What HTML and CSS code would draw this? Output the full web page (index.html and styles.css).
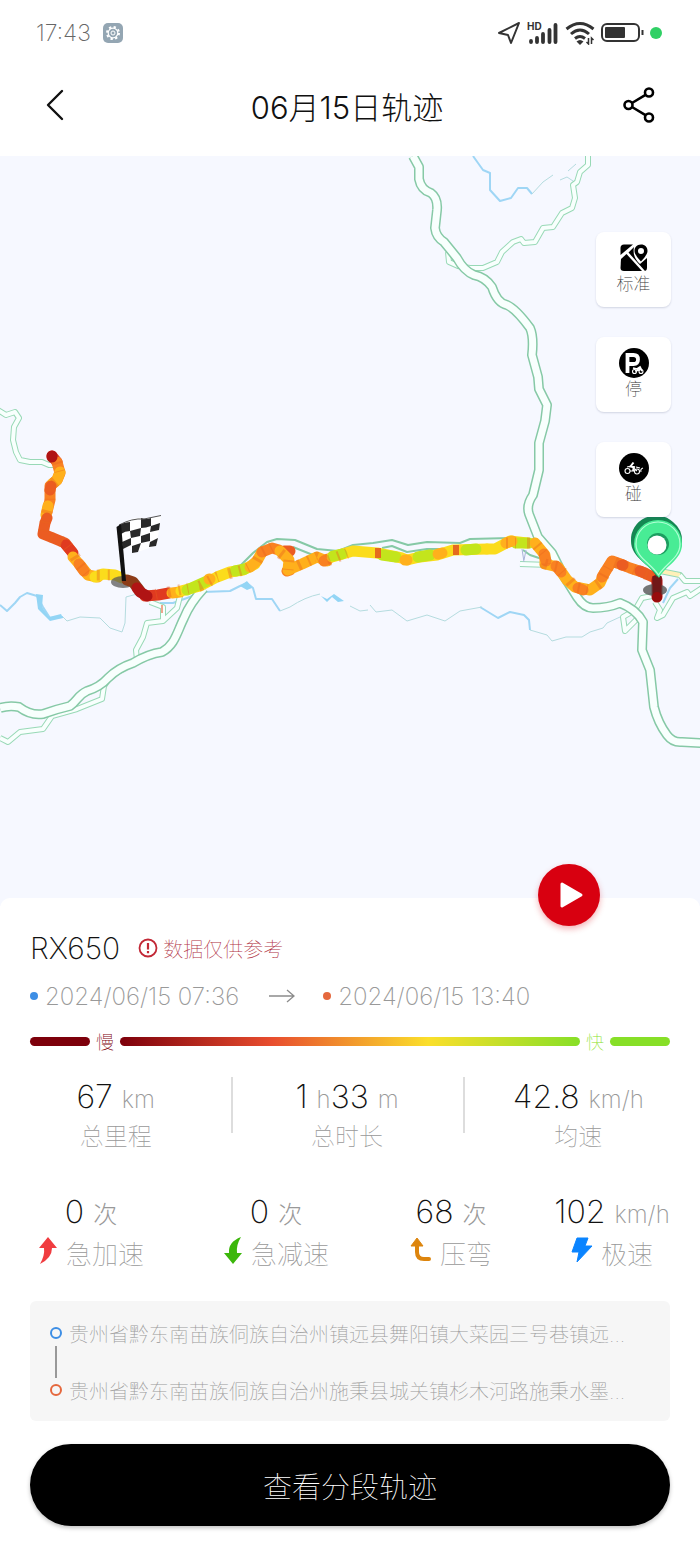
FILE: index.html
```html
<!DOCTYPE html>
<html lang="zh-CN">
<head>
  <meta charset="UTF-8" />
  <meta name="viewport" content="width=device-width, initial-scale=1.0" />
  <title>06月15日轨迹</title>
  <link rel="stylesheet" href="styles.css">
</head>
<body>
  <div class="status-bar">
    <span class="clock">17:43</span>
    <svg class="status-gear" width="20" height="20" viewBox="0 0 20 20" aria-hidden="true">
      <rect width="20" height="20" rx="5" fill="#94a6b3"/>
      <circle cx="10" cy="10" r="6" fill="none" stroke="#fff" stroke-width="2" stroke-dasharray="2.3 2.4"/>
      <circle cx="10" cy="10" r="4.8" fill="none" stroke="#fff" stroke-width="1.2"/>
      <circle cx="10" cy="10" r="2" fill="none" stroke="#fff"/>
    </svg>
    <div class="status-icons">
      <svg width="24" height="24" viewBox="0 0 24 24" aria-hidden="true">
        <path d="M22 2 L14 22 L11 14 L2 12 Z" fill="none" stroke="#333" stroke-width="2" stroke-linejoin="round"/>
      </svg>
      <svg width="32" height="24" viewBox="0 0 32 24" aria-hidden="true">
        <text x="0" y="9" class="hd">HD</text>
        <path d="M4 21v-1M10 21v-4M16 21v-8M22.500 21v-12M28.500 21V4" fill="none" stroke="#333" stroke-width="3.800" stroke-linecap="round"/>
      </svg>
      <svg width="30" height="24" viewBox="0 0 30 24" aria-hidden="true">
        <path d="M1.500 8 Q15 -3 28.500 8M6 13 Q15 5 24 13M10 17.500 Q15 13.500 20 17.500" fill="none" stroke="#333" stroke-width="3"/>
        <path d="M11.500 20.500 Q15 17.500 18.500 20.500 L15 24Z" fill="#333"/>
        <path d="M23.500 17v6l-2-2M26.500 23v-6l2 2" fill="none" stroke="#333" stroke-width="1.500"/>
      </svg>
      <svg class="battery" width="43" height="20" viewBox="0 0 43 20" aria-hidden="true">
        <rect x="1" y="1" width="37" height="17" rx="5" fill="none" stroke="#333" stroke-width="2"/>
        <rect x="4" y="4" width="20" height="11" rx="1" fill="#333"/>
        <path d="M41.500 7v5" stroke="#333" stroke-width="2"/>
      </svg>
      <span class="privacy-dot"></span>
    </div>
  </div>

  <header class="title-bar">
    <button class="icon-btn" type="button" aria-label="返回">
      <svg width="20" height="34" viewBox="0 0 20 34" aria-hidden="true"><path d="M17 3 L3 17 L17 31" fill="none" stroke="#111" stroke-width="2.400" stroke-linecap="round" stroke-linejoin="round"/></svg>
    </button>
    <h1>06月15日轨迹</h1>
    <button class="icon-btn" type="button" aria-label="分享">
      <svg width="32" height="36" viewBox="0 0 32 36" fill="none" stroke="#000" stroke-width="2.600" aria-hidden="true">
        <circle cx="5.500" cy="18" r="4"/><circle cx="26" cy="5.500" r="4"/><circle cx="26" cy="30.500" r="4"/>
        <path d="M9 16 L22.500 7.800M9 20 L22.500 28.200"/>
      </svg>
    </button>
  </header>

  <main>
    <section class="map" aria-label="轨迹地图">
      <svg class="map-canvas" viewBox="0 156 700 750" aria-hidden="true">
        <defs>
          <g id="main-roads">
            <path d="M0 708 Q9 705 19 707 Q31 716 43 714 Q57 709 70 706 C78 700 78 695 87 691 Q100 687 108 678 Q118 668 133 663 Q148 654 162 652 C175 645 177 632 184 618 Q190 603 204 588"/>
            <path d="M413 156 L419 167 L419 179 Q421 190 431 193 Q438 198 437 210 L435 228 Q436 237 444 242 L457 258 Q464 271 474 275 Q485 277 492 287 Q497 303 507 305 Q516 309 530 328 Q534 337 532 355 L538 377 L539 389 L547 405 L545 421 L539 443 L539 470 L533 495 Q526 505 529 514 L538 537 L552 553 L562 573 L577 597 Q584 608 593 608 Q608 608 620 603 Q636 609 643 622 L642 650 L650 670 L654 707 Q658 723 667 735 Q673 743 682 742 L702 743"/>
          </g>
          <g id="side-roads">
            <path d="M-2 410 L6 415 L15 412 L19 418 L14 427 L13 440 L16 452 L20 460 L30 462 L42 462 L49 465 L54 465"/>
            <path d="M588 156 L588 165 L580 172 L577 182 L573 185 L575 198 L572 208 L562 213 L553 227 L543 228 L535 242 L524 243 L521 239 L513 242 L502 252 L497 262 L483 268 L470 268 L458 266 L449 262 L448 252"/>
            <path d="M180 596 L177 608 L163 621 L147 623 L143 637 L136 650 L137 660 L123 669 L110 677 L104 686 L102 699 L77 709 L52 716 L43 729 L20 732 L8 742 L0 738"/>
            <path d="M150 602 L163 607 L163 620"/>
            <path d="M652 596 L642 598 L635 610 L623 617 L625 631 L637 619"/>
            <path d="M655 602 L660 610 L657 618 L663 615 L673 598 L687 592 L690 596 L702 588"/>
            <path d="M520 564 L550 565"/>
          </g>
        </defs>

        <g class="river">
          <path d="M0 605 L7 611 L15 603 L20 597 L27 593 L37 596 L43 607 L50 618 L63 617"/>
          <path d="M160 603 L173 603 L187 598 L203 592 L230 591 L240 586 L247 583 L253 588 L256 599 L272 599 L280 611"/>
          <path d="M480 607 L498 618 L510 612 L524 615 L529 620 L530 630"/>
          <path d="M473 156 L478 163 L483 170 L490 173 L490 190 L500 201 L511 198 L518 188 L527 188 L532 194"/>
          <path d="M663 603 L670 588 L678 579"/>
        </g>
        <g class="lake">
          <path d="M36 594 L43 595 L42 607 L49 617 L61 614 L63 618 L50 621 L38 609Z"/>
          <path d="M240 586 L247 581 L252 588 L247 590Z"/>
          <path d="M321 596 L327 602 L332 597 L338 602 L344 601 L334 594 L327 599Z"/>
        </g>
        <g class="stream">
          <path d="M63 617 L67 621 L80 617 L100 618 L110 628 L122 632 L125 623 L126 597 L137 594"/>
          <path d="M280 611 L290 607 Q305 597 320 594M350 606 L360 611 L368 610M370 605 L376 612 L392 610 L407 621 L427 615 L445 621 L460 611 L482 607"/>
          <path d="M530 630 L547 635 L552 641 L566 637 L582 637 L590 632 L603 628 L607 623 L620 617"/>
          <path d="M532 194 L543 182 L553 175M560 180 L567 177 L573 181M568 171 L576 164"/>
        </g>

        <use href="#side-roads" class="side-casing"/>
        <use href="#side-roads" class="side-fill"/>
        <use href="#main-roads" class="main-casing"/>
        <use href="#main-roads" class="main-fill"/>
        <g class="highway">
          <path d="M204 586 L225 574 L240 566 L253 553 L267 542 L277 539 L295 540 L317 549 L338 551 L353 545 L373 543 L392 540 L408 545 L427 542 L460 543 L470 539 L510 538"/>
          <path d="M293 547 L313 555M382 548 L392 546 L407 552 L427 549 L443 549M523 550 L530 555 L545 560"/>
        </g>
        <path d="M522 549 L524 562M526 550 L524 560" class="ramp"/>
        <path d="M660 571 L680 575 L685 581 L702 581" class="side-casing"/>
        <path d="M660 571 L680 575" class="town-road"/>
        <path d="M680 575 L685 581 L702 581" class="side-fill"/>
        <path d="M162 605v8" class="stub"/>

        <g class="track">
          <path class="t-red" d="M52 456 L57 462"/>
          <path class="t-orange" d="M57 462 L60 473 L57 480 L50 486 L50 500 L47 512"/>
          <path class="t-amber" d="M60 472 L57 480 L52 484M48 506 L46 515"/>
          <path class="t-coral" d="M51 486 L50 490M47 518 L45 523 L43 534 L53 538 L65 543 L72 552"/>
          <path class="t-red" d="M66 545 L73 553"/>
          <path class="t-amber" d="M73 557 L80 565 L88 575 L98 577"/>
          <path class="t-orange" d="M79 564 L84 571"/>
          <path class="t-yellow" d="M95 577 L103 574 L115 575 L122 578"/>
          <path class="t-red" d="M145 596 L158 595 L169 593"/>
          <path class="t-amber" d="M172 593 L180 592"/>
          <path class="t-yellow" d="M181 591 L200 586 L217 577 L230 572 L243 570 L255 564"/>
          <path class="t-lime" d="M187 590 L207 581M235 571 L245 569"/>
          <path class="t-amber" d="M209 579 L210 579M250 567 L257 561 L262 552"/>
          <path class="t-coral" d="M290 551 L284 551"/>
          <path class="t-orange" d="M262 552 L272 548 L279 550M290 570 L287 571"/>
          <path class="t-amber" d="M280 551 L289 560 L288 570 L302 564 L317 557 L327 561"/>
          <path class="t-orange" d="M324 561 L328 559"/>
          <path class="t-yellow" d="M332 557 L353 551 L377 553 L402 558 L407 560 L420 557 L437 555 L453 550 L487 549"/>
          <path class="t-lime" d="M333 556 L342 554M382 555 L396 557M418 557 L430 555M466 550 L476 549"/>
          <path class="t-amber" d="M405 560 L407 560M438 554 L442 553"/>
          <path class="t-yellow" d="M487 549 L495 549 L510 541 L527 543"/>
          <path class="t-lime" d="M516 543 L529 543"/>
          <path class="t-amber" d="M506 543 L512 541M535 543 L540 549 L545 555 L545 564 L558 567 L567 580 L575 587 L590 590 L600 583 L605 572"/>
          <path class="t-orange" d="M544 554 L546 561M556 566 L561 572M578 588 L583 590M602 577 L607 569 L612 561 L623 565"/>
          <path class="t-orange" d="M620 564 L630 568 L645 573"/>
          <path class="t-coral" d="M622 565 L623 565M640 571 L653 577"/>
          <path class="t-dark" d="M52 456 L52 457M657 580 L657 597"/>
        </g>
        <path class="track-bands" d="M57 462 L60 473 L57 480 L50 486 L50 500 L47 512 L43 534 L53 538 L65 543 L72 552 L80 565 L88 575 L103 575 L115 575M147 596 L200 586 L217 577 L243 570 L255 564 L262 552 L272 547 L289 560 L288 570 L317 557 L327 561 L353 551"/>
        <path class="track-bands" d="M506 543 L535 543 L545 555 L545 564 L558 567 L575 587 L590 590 L600 583 L612 561 L653 577"/>
        <path class="band" d="M375 553h6M453 550h6"/>

        <ellipse cx="123" cy="582" rx="12" ry="6" fill="#555" fill-opacity=".72"/>
        <path class="track-brown" d="M127 580 L133 582 L140 591"/>
        <path class="track-dark" d="M137 588 L140 592 L147 596"/>

        <g class="flag">
          <path d="M120 526 Q131 516 143 518 Q153 519 161 515 L157 544 Q147 550 135 552 Q128 545 122 549Z" fill="#fff"/>
          <g fill="#292929">
            <path d="M119 525 Q124 522 130 522 V531 Q125 531 121 534Z"/><path d="M141 518 Q146 520 151 518 V526 Q146 528 141 528Z"/>
            <path d="M130 531 L141 528 L140 536 L131 538Z"/><path d="M151 526 L160 523 L159 530 L150 532Z"/>
            <path d="M122 542 L131 538 L131 545 L123 549Z"/><path d="M141 536 L150 533 L150 541 L141 543Z"/>
            <path d="M132 546 L141 543 L138 552 L132 553Z"/><path d="M150 542 L158 538 L156 546 L149 547Z"/>
          </g>
          <path d="M119 525 Q132 518 144 519 L161 515.500" fill="none" stroke="#555"/>
          <path d="M116.500 527 L121 524 L126 581 H122Z" fill="#111"/>
        </g>

        <ellipse cx="655" cy="590" rx="12" ry="6" fill="#555" fill-opacity=".8"/>
        <path d="M657 576 V595" stroke="#701818" stroke-width="9"/>
        <circle cx="657" cy="597" r="5" fill="#970c0c"/>
        <path d="M657 577 C650 564 631 558 631 541 A25 24 0 0 1 673 522 A25 24 0 0 1 682 542 C682 557 664 564 657 577Z" fill="#158853"/>
        <path d="M659 578 C651 565 634 560 634 544 A24 24 0 0 1 682 544 C682 560 666 565 659 578Z" fill="#48ec95"/>
        <path d="M658.500 575 C651 563 636 558 636 544 A22 22 0 0 1 680 544 C680 558 666 563 658.500 575Z" fill="none" stroke="#b3ffd6" stroke-width="1.200"/>
        <circle cx="658" cy="544" r="11" fill="#1c9d60"/>
        <circle cx="657" cy="545" r="9.500" fill="#fff"/>
      </svg>

      <div class="map-tools">
        <button class="map-tool" type="button">
          <svg width="30" height="30" viewBox="0 0 30 30" aria-hidden="true">
            <path d="M5 1.500H14L1.500 12V5Q1.500 1.500 5 1.500Z"/>
            <path d="M2 16 L7.500 11 L23 28H5Q1.500 28 1.500 25Z"/>
            <path d="M9.500 9.500 L15 4Q13 14 21 21L28 15V25Q28 27.500 26 28Z"/>
            <path fill-rule="evenodd" d="M22 1.500C17.500 1.500 15.500 4.500 15.500 8C15.500 12 22 18.500 22 18.500S28.500 12 28.500 8C28.500 4 26 1.500 22 1.500ZM22 5A3 3 0 1 1 22 11A3 3 0 0 1 22 5Z"/>
          </svg>
          <span>标准</span>
        </button>
        <button class="map-tool" type="button">
          <svg width="30" height="30" viewBox="0 0 30 30" aria-hidden="true">
            <circle cx="15" cy="15" r="15"/>
            <path d="M8.500 25V7H14.500Q19 7 19 11.500T14.500 16H9" fill="none" stroke="#fff" stroke-width="3.800"/>
            <g fill="none" stroke="#fff" stroke-width="1.100"><circle cx="15.500" cy="23.500" r="2"/><circle cx="22" cy="23.500" r="2"/><path d="M14 20 L18 21 L21 19 L23 23M16 23 L20 22 L21 19" stroke-width="1.800"/></g>
          </svg>
          <span>停</span>
        </button>
        <button class="map-tool" type="button">
          <svg width="30" height="30" viewBox="0 0 30 30" aria-hidden="true">
            <circle cx="15" cy="15" r="15"/>
            <g fill="none" stroke="#fff" stroke-width="1.100"><circle cx="8.500" cy="18" r="2.500"/><circle cx="18" cy="18.500" r="2.500"/><path d="M8 14 L12 13 L18 18M11 18h5M17 14l4 1M22 19q-1-3 2-4"/><path d="M14.500 9.500 L11.500 13.500 L15 14 L14 18" stroke-width="2"/></g>
          </svg>
          <span>碰</span>
        </button>
      </div>
    </section>

    <section class="panel">
      <button class="play-btn" type="button" aria-label="播放轨迹">
        <svg width="26" height="28" viewBox="0 0 26 28" aria-hidden="true"><path d="M4 3 L23 14 L4 25Z" fill="#fff" stroke="#fff" stroke-width="3" stroke-linejoin="round"/></svg>
      </button>

      <div class="vehicle">
        <h2>RX650</h2>
        <svg width="20" height="20" viewBox="0 0 20 20" fill="none" stroke="#c22836" stroke-width="1.800" aria-hidden="true"><circle cx="10" cy="10" r="8.500"/><path d="M10 5v6.500M10 13v2.200" stroke-width="2.200"/></svg>
        <span class="notice">数据仅供参考</span>
      </div>

      <div class="period">
        <span class="dot dot-start"></span>
        <time datetime="2024-06-15T07:36">2024/06/15 07:36</time>
        <svg class="arrow" width="26" height="14" viewBox="0 0 26 14" fill="none" stroke="#8c8c8c" stroke-width="1.300" aria-hidden="true"><path d="M0 7H25M18 1L25 7L18 13"/></svg>
        <span class="dot dot-end"></span>
        <time datetime="2024-06-15T13:40">2024/06/15 13:40</time>
      </div>

      <div class="speed-scale">
        <span class="cap cap-slow"></span>
        <span class="slow">慢</span>
        <span class="ramp-bar"></span>
        <span class="fast">快</span>
        <span class="cap cap-fast"></span>
      </div>

      <div class="totals">
        <div class="stat"><p class="value">67 <small>km</small></p><p class="label">总里程</p></div>
        <div class="stat"><p class="value">1 <small>h</small>33 <small>m</small></p><p class="label">总时长</p></div>
        <div class="stat"><p class="value">42.8 <small>km/h</small></p><p class="label">均速</p></div>
      </div>

      <div class="events">
        <div class="stat">
          <p class="value">0 <small>次</small></p>
          <p class="label">
            <svg width="20" height="28" viewBox="0 0 20 28" aria-hidden="true"><path d="M10 0 L19 11 H14 Q14 21 2 27 Q7 18 6 11 H1Z" fill="#f03c40"/></svg>
            急加速
          </p>
        </div>
        <div class="stat">
          <p class="value">0 <small>次</small></p>
          <p class="label">
            <svg width="20" height="28" viewBox="0 0 20 28" aria-hidden="true"><path d="M10 27 L1 16 H6 Q5 5 18 0 Q13 8 14 16 H19Z" fill="#3cb70b"/></svg>
            急减速
          </p>
        </div>
        <div class="stat">
          <p class="value">68 <small>次</small></p>
          <p class="label">
            <svg width="22" height="28" viewBox="0 0 22 28" aria-hidden="true"><path d="M7 1 L13 9 H1Z" fill="#dd850d" stroke="#dd850d" stroke-linejoin="round"/><path d="M7 8 V15 Q7 22 14 22 H19" fill="none" stroke="#dd850d" stroke-width="4" stroke-linecap="round"/></svg>
            压弯
          </p>
        </div>
        <div class="stat">
          <p class="value">102 <small>km/h</small></p>
          <p class="label">
            <svg width="22" height="28" viewBox="0 0 22 28" aria-hidden="true"><path d="M6 1 H17 L14 9 H21 L6 25 L8 15 H1Z" fill="#0a84ff" stroke="#0a84ff" stroke-linejoin="round"/></svg>
            极速
          </p>
        </div>
      </div>

      <ol class="places">
        <li><span class="ring ring-start"></span><span class="address">贵州省黔东南苗族侗族自治州镇远县舞阳镇大菜园三号巷镇远...</span></li>
        <li><span class="ring ring-end"></span><span class="address">贵州省黔东南苗族侗族自治州施秉县城关镇杉木河路施秉水墨...</span></li>
      </ol>

      <button class="segments-btn" type="button">查看分段轨迹</button>
    </section>
  </main>
</body>
</html>
```
FILE: styles.css
```css
:root {
  --text: #111;
  --muted: #999;
  --map-bg: #f6f8ff;
  --slow: #7d000b;
  --fast: #87df27;
}

* {
  box-sizing: border-box;
  margin: 0;
  padding: 0;
}

body {
  font-family: Inter, "Noto Sans CJK SC", sans-serif;
  font-weight: 200;
  background: #fff;
  color: var(--text);
}

button {
  font: inherit;
  color: inherit;
  border: none;
  background: none;
  cursor: pointer;
}

svg {
  display: block;
  flex: none;
}

.status-bar {
  display: flex;
  align-items: center;
  gap: 12px;
  height: 66px;
  padding: 0 38px 0 36px;
}

.clock {
  font-size: 23px;
  color: #666;
}

.status-icons {
  display: flex;
  align-items: center;
  gap: 6px;
  margin-left: auto;
}

.hd {
  font-size: 10px;
  font-weight: 700;
  fill: #333;
}

.privacy-dot {
  width: 12px;
  height: 12px;
  border-radius: 50%;
  background: #30d065;
}

.title-bar {
  display: flex;
  align-items: center;
  justify-content: space-between;
  height: 90px;
  padding: 0 45px 12px 39px;
}

.title-bar h1 {
  font-size: 31px;
  font-weight: 300;
}

.icon-btn {
  display: flex;
  justify-content: center;
  width: 32px;
}

/* map */
.map {
  position: relative;
  background: var(--map-bg);
}

.map-canvas {
  width: 100%;
  height: auto;
}

.map-canvas path,
.map-canvas use {
  stroke-linejoin: round;
}

.main-casing,
.side-casing,
.highway {
  fill: none;
  stroke: #86c9a6;
}

.main-casing {
  stroke-width: 10px;
}

.main-fill {
  fill: none;
  stroke: #f8fffd;
  stroke-width: 7px;
}

.side-casing {
  stroke: #98d9b6;
  stroke-width: 6px;
}

.side-fill {
  fill: none;
  stroke: #f8fffd;
  stroke-width: 4px;
}

.highway {
  stroke-width: 2px;
}

.ramp {
  fill: none;
  stroke: #a9b4d8;
}

.town-road {
  fill: none;
  stroke: #fff0b8;
  stroke-width: 4px;
}

.stub {
  stroke: #f0a58c;
  stroke-width: 2px;
}

.river {
  fill: none;
  stroke: #9fd6f5;
  stroke-width: 2px;
}

.lake {
  fill: #93d5f5;
}

.stream {
  fill: none;
  stroke: #b5dcdf;
}

.track,
.track-dark,
.track-brown {
  fill: none;
  stroke-width: 11px;
  stroke-linecap: round;
}

.t-dark,
.track-dark {
  stroke: #b01414;
}

.track-brown {
  stroke: #8c3c18;
}

.t-red {
  stroke: #e03a20;
}

.t-coral {
  stroke: #eb5c22;
}

.t-orange {
  stroke: #f98122;
}

.t-amber {
  stroke: #ffb01c;
}

.t-yellow {
  stroke: #fbdc1c;
}

.t-lime {
  stroke: #c3e51c;
}

.track-bands {
  fill: none;
  stroke: #e8641e;
  stroke-opacity: .4;
  stroke-width: 11px;
  stroke-dasharray: 2 7 1 11 3 8;
}

.band {
  stroke: #e56a1e;
  stroke-width: 10px;
}

.map-tools {
  position: absolute;
  top: 76px;
  right: 29px;
  display: flex;
  flex-direction: column;
  gap: 30px;
}

.map-tool {
  display: flex;
  flex-direction: column;
  align-items: center;
  width: 75px;
  height: 75px;
  padding-top: 11px;
  border-radius: 8px;
  background: #fff;
  box-shadow: 0 1px 2px rgba(60, 70, 110, .2);
  font-size: 17px;
  font-weight: 100;
  line-height: 22px;
  color: #333;
}

/* trip panel */
.panel {
  position: relative;
  margin-top: -8px;
  padding: 32px 30px 30px;
  border-radius: 10px 10px 0 0;
  background: #fff;
}

.play-btn {
  position: absolute;
  top: -34px;
  right: 100px;
  display: flex;
  align-items: center;
  justify-content: center;
  width: 62px;
  height: 62px;
  padding-left: 4px;
  border-radius: 50%;
  background: #d80010;
  box-shadow: 0 3px 6px rgba(216, 0, 16, .3);
}

.vehicle {
  display: flex;
  align-items: center;
  height: 36px;
}

.vehicle h2 {
  margin-right: 18px;
  font-size: 30px;
  font-weight: 200;
}

.notice {
  margin-left: 5px;
  font-size: 20px;
  font-weight: 100;
  color: #b13445;
}

.period {
  display: flex;
  align-items: center;
  height: 60px;
  font-size: 24px;
  color: var(--muted);
}

.dot {
  width: 8px;
  height: 8px;
  margin-right: 7px;
  border-radius: 50%;
}

.dot-start {
  background: #3d8ee5;
}

.dot-end {
  background: #e5683d;
}

.arrow {
  margin: 0 28px 0 30px;
}

.speed-scale {
  display: flex;
  align-items: center;
  gap: 6px;
  height: 30px;
  font-size: 18px;
  font-weight: 100;
}

.cap {
  width: 60px;
  height: 9px;
  border-radius: 5px;
}

.cap-slow {
  background: var(--slow);
}

.cap-fast {
  background: var(--fast);
}

.slow {
  color: var(--slow);
}

.fast {
  color: var(--fast);
}

.ramp-bar {
  flex: 1;
  height: 9px;
  border-radius: 5px;
  background: linear-gradient(90deg, var(--slow), #e84d2e 33%, #fbdf2b 67%, var(--fast));
}

.value {
  font-size: 32px;
  line-height: 40px;
  white-space: nowrap;
}

.value small {
  font-size: 24px;
  color: var(--muted);
}

.label {
  font-size: 24px;
  font-weight: 100;
  line-height: 34px;
  color: var(--muted);
}

.totals {
  display: grid;
  grid-template-columns: repeat(3, 1fr);
  margin: 21px -24px 0 -30px;
  text-align: center;
}

.totals .stat + .stat {
  background: linear-gradient(#ddd, #ddd) left 0 / 2px 56px no-repeat;
}

.events {
  display: grid;
  grid-template-columns: 182fr 188fr 162fr 160fr;
  margin: 38px -22px 0 -30px;
}

.events .stat {
  display: flex;
  flex-direction: column;
  align-items: center;
}

.events .label {
  display: flex;
  align-items: center;
  gap: 8px;
  font-size: 26px;
  line-height: 40px;
}

.events svg {
  margin-bottom: 8px;
}

.places {
  display: flex;
  flex-direction: column;
  gap: 27px;
  margin-top: 26px;
  padding: 17px 27px 16px 20px;
  border-radius: 6px;
  background: #f6f6f6;
  list-style: none;
}

.places li {
  position: relative;
  display: flex;
  align-items: center;
  gap: 7px;
  height: 30px;
}

/* connector between the two stops */
.places li:first-child::after {
  content: "";
  position: absolute;
  left: 5px;
  top: 28px;
  width: 2px;
  height: 32px;
  background: #999;
}

.ring {
  flex: none;
  width: 12px;
  height: 12px;
  border: 2px solid;
  border-radius: 50%;
}

.ring-start {
  border-color: #3d8ee5;
}

.ring-end {
  border-color: #e5683d;
}

.address {
  overflow: hidden;
  font-size: 20px;
  font-weight: 100;
  color: var(--muted);
  text-overflow: ellipsis;
  white-space: nowrap;
}

.segments-btn {
  display: block;
  width: 100%;
  height: 82px;
  margin-top: 23px;
  border-radius: 41px;
  background: #000;
  box-shadow: 0 2px 4px rgba(0, 0, 0, .25);
  font-size: 29px;
  font-weight: 100;
  color: #fff;
}
```
